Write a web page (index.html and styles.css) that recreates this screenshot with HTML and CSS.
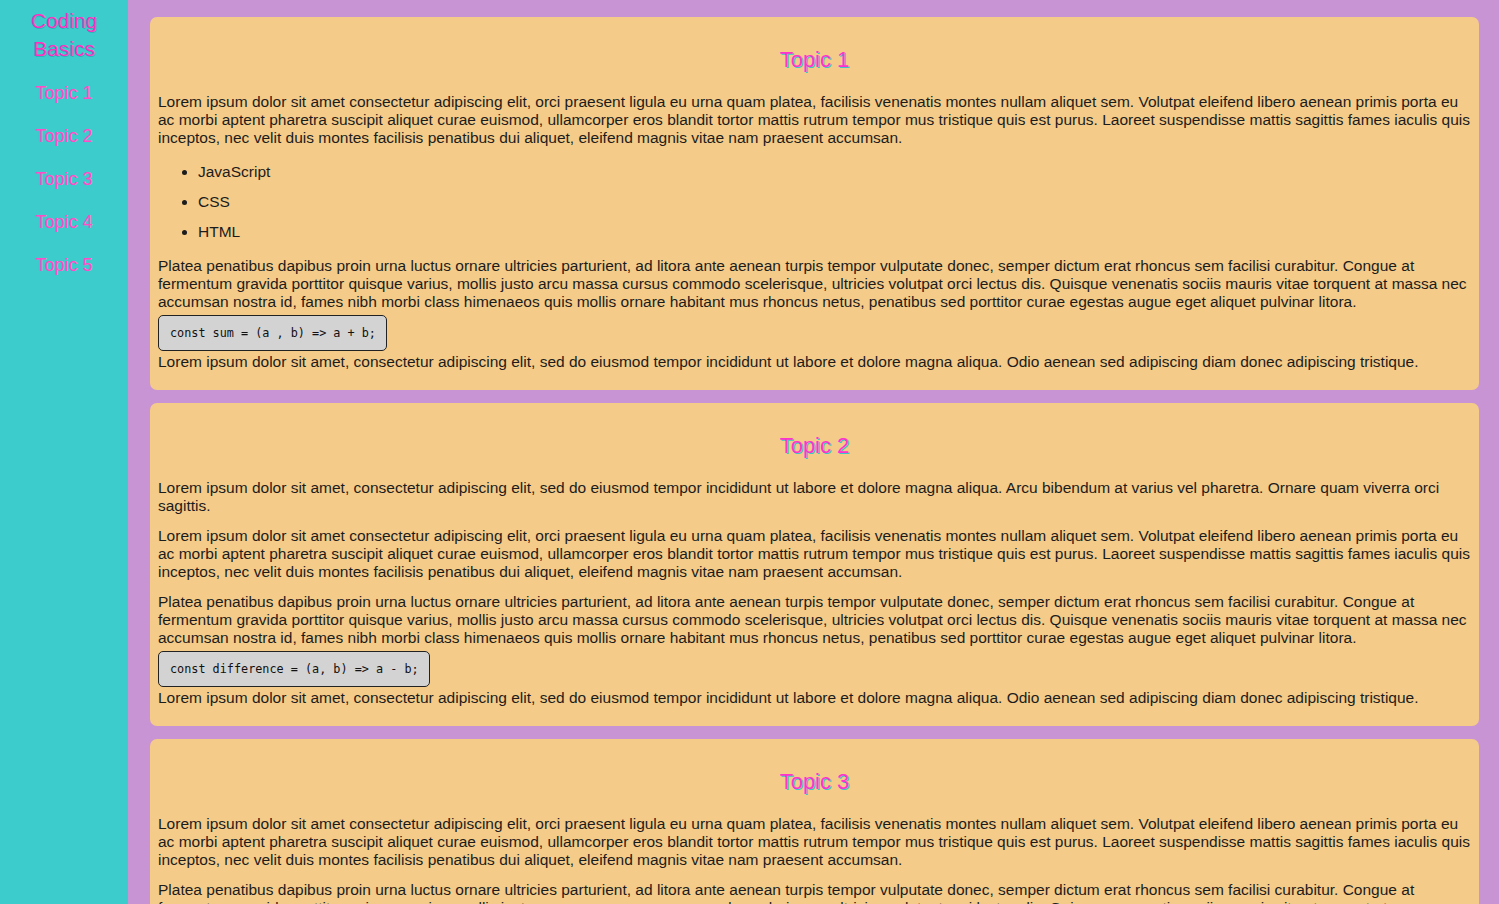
FILE: index.html
```html
<!DOCTYPE html>
<html lang="en">
<head>
<meta charset="utf-8">
<title>Coding Basics</title>
<link rel="stylesheet" href="styles.css">
</head>
<body>
<div class="layout">
  <nav class="sidebar">
    <div class="brand">Coding Basics</div>
    <a class="nav-link" href="#topic-1">Topic 1</a>
    <a class="nav-link" href="#topic-2">Topic 2</a>
    <a class="nav-link" href="#topic-3">Topic 3</a>
    <a class="nav-link" href="#topic-4">Topic 4</a>
    <a class="nav-link" href="#topic-5">Topic 5</a>
  </nav>
  <main class="main">
    <section class="card" id="topic-1">
      <h2 class="card-title">Topic 1</h2>
      <p class="text">Lorem ipsum dolor sit amet consectetur adipiscing elit, orci praesent ligula eu urna quam platea, facilisis venenatis montes nullam aliquet sem. Volutpat eleifend libero aenean primis porta eu ac morbi aptent pharetra suscipit aliquet curae euismod, ullamcorper eros blandit tortor mattis rutrum tempor mus tristique quis est purus. Laoreet suspendisse mattis sagittis fames iaculis quis inceptos, nec velit duis montes facilisis penatibus dui aliquet, eleifend magnis vitae nam praesent accumsan.</p>
      <ul class="list">
        <li>JavaScript</li>
        <li>CSS</li>
        <li>HTML</li>
      </ul>
      <p class="text before-code">Platea penatibus dapibus proin urna luctus ornare ultricies parturient, ad litora ante aenean turpis tempor vulputate donec, semper dictum erat rhoncus sem facilisi curabitur. Congue at fermentum gravida porttitor quisque varius, mollis justo arcu massa cursus commodo scelerisque, ultricies volutpat orci lectus dis. Quisque venenatis sociis mauris vitae torquent at massa nec accumsan nostra id, fames nibh morbi class himenaeos quis mollis ornare habitant mus rhoncus netus, penatibus sed porttitor curae egestas augue eget aliquet pulvinar litora.</p>
      <pre class="code">const sum = (a , b) =&gt; a + b;</pre>
      <p class="text after-code">Lorem ipsum dolor sit amet, consectetur adipiscing elit, sed do eiusmod tempor incididunt ut labore et dolore magna aliqua. Odio aenean sed adipiscing diam donec adipiscing tristique.</p>
    </section>
    <section class="card" id="topic-2">
      <h2 class="card-title">Topic 2</h2>
      <p class="text">Lorem ipsum dolor sit amet, consectetur adipiscing elit, sed do eiusmod tempor incididunt ut labore et dolore magna aliqua. Arcu bibendum at varius vel pharetra. Ornare quam viverra orci sagittis.</p>
      <p class="text">Lorem ipsum dolor sit amet consectetur adipiscing elit, orci praesent ligula eu urna quam platea, facilisis venenatis montes nullam aliquet sem. Volutpat eleifend libero aenean primis porta eu ac morbi aptent pharetra suscipit aliquet curae euismod, ullamcorper eros blandit tortor mattis rutrum tempor mus tristique quis est purus. Laoreet suspendisse mattis sagittis fames iaculis quis inceptos, nec velit duis montes facilisis penatibus dui aliquet, eleifend magnis vitae nam praesent accumsan.</p>
      <p class="text before-code">Platea penatibus dapibus proin urna luctus ornare ultricies parturient, ad litora ante aenean turpis tempor vulputate donec, semper dictum erat rhoncus sem facilisi curabitur. Congue at fermentum gravida porttitor quisque varius, mollis justo arcu massa cursus commodo scelerisque, ultricies volutpat orci lectus dis. Quisque venenatis sociis mauris vitae torquent at massa nec accumsan nostra id, fames nibh morbi class himenaeos quis mollis ornare habitant mus rhoncus netus, penatibus sed porttitor curae egestas augue eget aliquet pulvinar litora.</p>
      <pre class="code">const difference = (a, b) =&gt; a - b;</pre>
      <p class="text after-code">Lorem ipsum dolor sit amet, consectetur adipiscing elit, sed do eiusmod tempor incididunt ut labore et dolore magna aliqua. Odio aenean sed adipiscing diam donec adipiscing tristique.</p>
    </section>
    <section class="card" id="topic-3">
      <h2 class="card-title">Topic 3</h2>
      <p class="text">Lorem ipsum dolor sit amet consectetur adipiscing elit, orci praesent ligula eu urna quam platea, facilisis venenatis montes nullam aliquet sem. Volutpat eleifend libero aenean primis porta eu ac morbi aptent pharetra suscipit aliquet curae euismod, ullamcorper eros blandit tortor mattis rutrum tempor mus tristique quis est purus. Laoreet suspendisse mattis sagittis fames iaculis quis inceptos, nec velit duis montes facilisis penatibus dui aliquet, eleifend magnis vitae nam praesent accumsan.</p>
      <p class="text">Platea penatibus dapibus proin urna luctus ornare ultricies parturient, ad litora ante aenean turpis tempor vulputate donec, semper dictum erat rhoncus sem facilisi curabitur. Congue at fermentum gravida porttitor quisque varius, mollis justo arcu massa cursus commodo scelerisque, ultricies volutpat orci lectus dis. Quisque venenatis sociis mauris vitae torquent at massa nec accumsan nostra id, fames nibh morbi class himenaeos quis mollis ornare habitant mus rhoncus netus, penatibus sed porttitor curae egestas augue eget aliquet pulvinar litora.</p>
    </section>
  </main>
</div>
</body>
</html>
```

FILE: styles.css
```css
html, body {
  margin: 0;
  padding: 0;
  height: 100%;
  overflow: hidden;
}

body {
  font-family: "Liberation Sans", Arial, sans-serif;
  color: #1c1c1c;
  background: #c894d4;
}

.layout {
  display: flex;
  height: 100vh;
}

.sidebar {
  width: 128px;
  flex: 0 0 128px;
  background: #3ccccc;
  display: flex;
  flex-direction: column;
  align-items: center;
  padding-top: 7px;
  box-sizing: border-box;
}

.brand {
  color: #ff2fc0;
  font-size: 21px;
  line-height: 28px;
  text-align: center;
  width: 80px;
  text-shadow: 1px 1px 0 rgba(40, 120, 160, 0.35);
  margin-bottom: 19px;
}

.nav-link {
  color: #ff4cc6;
  font-size: 18px;
  line-height: 22px;
  text-decoration: none;
  margin-bottom: 21px;
  text-shadow: 0 0 1px rgba(255, 140, 220, 0.6);
}

.main {
  flex: 1;
  padding: 17px 20px 0 22px;
  display: flex;
  flex-direction: column;
  gap: 13px;
  overflow: hidden;
}

.card {
  background: #f4cb88;
  border-radius: 7px;
  padding: 0 8px 7px;
  flex: 0 0 auto;
  display: flow-root;
}

.card-title {
  color: #ff33cc;
  font-size: 22px;
  line-height: 26px;
  font-weight: normal;
  text-align: center;
  margin: 30px 0 20px;
  text-shadow: 1px 1px 0 #3cc8c8;
}

.text {
  font-size: 15.5px;
  line-height: 18px;
  margin: 12px 0;
}

.list {
  margin: 16px 0;
  padding-left: 40px;
  font-size: 15.5px;
  line-height: 18px;
}

.list li + li {
  margin-top: 12px;
}

.before-code {
  margin-bottom: 4px;
}

.after-code {
  margin-top: 2px;
}

.code {
  display: block;
  width: fit-content;
  margin: 0;
  background: #d3d3d3;
  border: 1px solid #222;
  border-radius: 5px;
  padding: 10px 10px 9px 11px;
  font-family: "DejaVu Sans Mono", monospace;
  font-size: 11.8px;
  line-height: 15px;
  color: #111;
}
```
